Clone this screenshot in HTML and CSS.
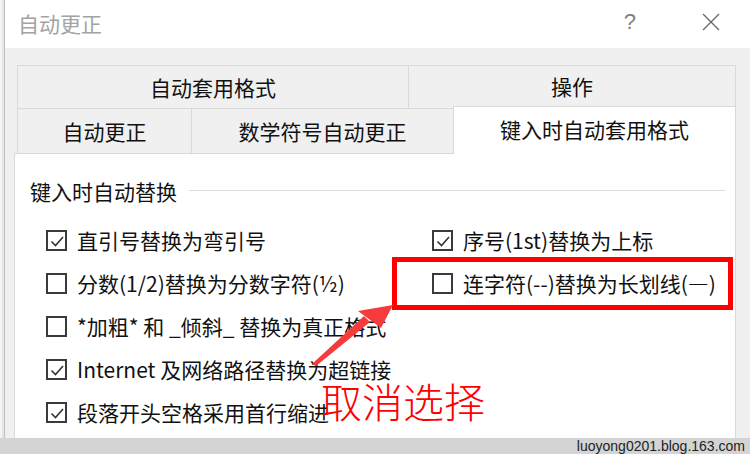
FILE: index.html
```html
<!DOCTYPE html>
<html lang="zh-CN">
<head>
<meta charset="utf-8">
<title>自动更正</title>
<link rel="stylesheet" href="styles.css">
</head>
<body>
<div class="screen">
  <div class="main">
    <div class="edge"></div>
    <div class="dialog">
      <div class="titlebar">
        <span class="title">自动更正</span>
        <span class="help">?</span>
        <svg class="close" width="18" height="18" viewBox="0 0 18 18"><path d="M1 1 L17 17 M17 1 L1 17" stroke="#666" stroke-width="1.3" fill="none"/></svg>
      </div>
      <div class="body">
        <div class="tabrow row1">
          <div class="tab t-auto">自动套用格式</div>
          <div class="tab t-op">操作</div>
        </div>
        <div class="tabrow row2">
          <div class="tab t-ac">自动更正</div>
          <div class="tab t-math">数学符号自动更正</div>
          <div class="tab active">键入时自动套用格式</div>
        </div>
        <div class="panel">
          <div class="group-title"><span>键入时自动替换</span><i class="rule"></i></div>
          <div class="options">
            <label class="opt"><span class="box checked"><svg width="16" height="16" viewBox="0 0 16 16"><path d="M2.5 8.5 L6.5 12.5 L14 4" stroke="#333" stroke-width="1.6" fill="none"/></svg></span><span class="txt">直引号替换为弯引号</span></label>
            <label class="opt"><span class="box checked"><svg width="16" height="16" viewBox="0 0 16 16"><path d="M2.5 8.5 L6.5 12.5 L14 4" stroke="#333" stroke-width="1.6" fill="none"/></svg></span><span class="txt">序号(1st)替换为上标</span></label>
            <label class="opt"><span class="box"></span><span class="txt">分数(1/2)替换为分数字符(½)</span></label>
            <label class="opt"><span class="box"></span><span class="txt">连字符(--)替换为长划线(—)</span></label>
            <label class="opt wide"><span class="box"></span><span class="txt">*加粗* 和 _倾斜_ 替换为真正格式</span></label>
            <label class="opt wide"><span class="box checked"><svg width="16" height="16" viewBox="0 0 16 16"><path d="M2.5 8.5 L6.5 12.5 L14 4" stroke="#333" stroke-width="1.6" fill="none"/></svg></span><span class="txt">Internet 及网络路径替换为超链接</span></label>
            <label class="opt wide"><span class="box checked"><svg width="16" height="16" viewBox="0 0 16 16"><path d="M2.5 8.5 L6.5 12.5 L14 4" stroke="#333" stroke-width="1.6" fill="none"/></svg></span><span class="txt">段落开头空格采用首行缩进</span></label>
          </div>
        </div>
      </div>
    </div>
  </div>
  <div class="footer">luoyong0201.blog.163.com</div>

  <div class="mark-box"></div>
  <svg class="mark-arrow" width="750" height="454" viewBox="0 0 750 454">
    <polygon points="312,364 364,316 370,322 316,366" fill="#f53b3b"/>
    <polygon points="358,311 393,305 381,328" fill="#f53b3b"/>
  </svg>
  <div class="mark-text">取消选择</div>
</div>
</body>
</html>
```

FILE: styles.css
```css
* { box-sizing: border-box; }
html, body { margin: 0; padding: 0; }
body {
  width: 750px;
  height: 454px;
  overflow: hidden;
  background: #f0f0f0;
  font-family: "Noto Sans CJK SC", "Microsoft YaHei", sans-serif;
  color: #111;
}
.screen {
  position: relative;
  width: 750px;
  height: 454px;
  display: flex;
  flex-direction: column;
}
.main {
  display: flex;
  height: 438px;
}
.edge {
  width: 5px;
  background: #e6e6e6;
  border-left: 2px solid #f4f4f4;
  border-right: 1px solid #bdbdbd;
}
.dialog {
  flex: 1;
  display: flex;
  flex-direction: column;
  background: #f0f0f0;
}
.titlebar {
  height: 48px;
  background: #fff;
  display: flex;
  align-items: center;
  padding-left: 13px;
  padding-right: 30px;
}
.title {
  font-size: 21px;
  color: #a3a3a3;
  flex: 1;
  line-height: 24px;
  margin-top: -3px;
}
.help {
  font-family: "Liberation Sans", sans-serif;
  font-size: 22px;
  color: #808080;
  margin-right: 66px;
  margin-top: -4px;
}
.close { margin-top: -5px; }
.body {
  flex: 1;
  padding-top: 17px;
  display: flex;
  flex-direction: column;
}
.tabrow {
  display: flex;
  margin-left: 12px;
  margin-right: 14px;
}
.tab {
  font-size: 21px;
  line-height: 24px;
  color: #111;
  display: flex;
  align-items: center;
  justify-content: center;
  border-top: 1px solid #d9d9d9;
  border-left: 1px solid #d9d9d9;
}
.row1 { height: 43px; }
.row1 .tab { height: 43px; }
.t-auto { width: 391px; }
.t-op { flex: 1; border-right: 1px solid #d9d9d9; padding-bottom: 2px; }
.row2 { height: 45px; align-items: flex-end; }
.row2 .tab { height: 45px; }
.t-ac { width: 174px; }
.t-math { width: 262px; }
.row2 .tab.active {
  flex: 1;
  height: 48px;
  margin-bottom: -1px;
  background: #fff;
  border-right: 1px solid #d9d9d9;
  position: relative;
  z-index: 1;
  padding-bottom: 3px;
}
.panel {
  margin-left: 9px;
  margin-right: 14px;
  flex: 1;
  background: #fff;
  border: 1px solid #d9d9d9;
  border-bottom: none;
  padding: 25px 10px 0 15px;
}
.group-title {
  display: flex;
  align-items: center;
  font-size: 21px;
  line-height: 24px;
}
.rule {
  flex: 1;
  height: 1px;
  background: #dcdcdc;
  margin-left: 12px;
  margin-top: -2px;
}
.options {
  margin-top: 16px;
  margin-left: 16px;
  display: grid;
  grid-template-columns: 386px 1fr;
  grid-auto-rows: 43px;
}
.opt {
  display: flex;
  align-items: center;
  gap: 10px;
  font-size: 21px;
  line-height: 22px;
  white-space: nowrap;
}
.opt.wide { grid-column: 1 / 3; }
.box {
  width: 21px;
  height: 21px;
  border: 2px solid #3a3a3a;
  background: #fff;
  display: flex;
  align-items: center;
  justify-content: center;
  flex: none;
}
.txt { margin-top: -1px; }
.footer {
  height: 16px;
  background: #d4d4d4;
  font-family: "Liberation Sans", Arial, sans-serif;
  font-size: 14px;
  line-height: 16px;
  color: #222;
  text-align: right;
  padding-right: 5px;
}
.mark-box {
  position: absolute;
  left: 392px;
  top: 257px;
  width: 341px;
  height: 53px;
  border: 5px solid #ff0000;
}
.mark-arrow {
  position: absolute;
  left: 0;
  top: 0;
}
.mark-text {
  position: absolute;
  left: 321px;
  top: 383px;
  font-size: 41px;
  line-height: 34px;
  color: #ff0000;
  font-weight: 300;
}
```
